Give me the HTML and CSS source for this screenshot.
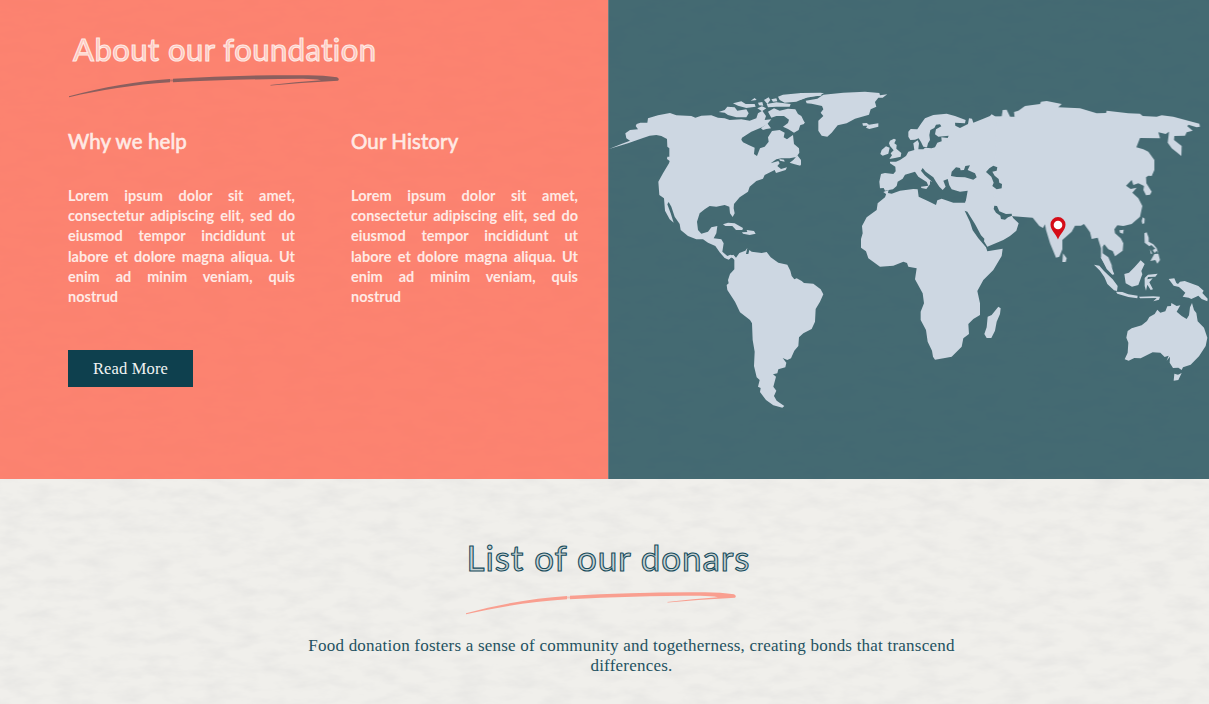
FILE: index.html
```html
<!DOCTYPE html>
<html lang="en">
<head>
<meta charset="utf-8">
<title>Our foundation</title>
<link rel="stylesheet" href="styles.css">
</head>
<body>
<svg class="defs" aria-hidden="true">
  <symbol id="swoosh" viewBox="0 0 272 24">
    <path d="M1 21.200 C35 12 70 6 102 4 L102 7.300 C65 9.800 32 15 1 22.300Z M105 3.700 C150 1.200 195 -.2 240 .2 Q256 .4 269 2.300 Q272 4 270 5.700 Q235 7.500 203 10.500 L202 9.900 Q228 6.800 253 5.200 Q246 3.900 235 3.800 C190 3.900 145 5.300 105 7.300Z"/>
    <path d="M101 4.500H106V6.500H101Z" opacity=".5"/>
  </symbol>
</svg>
<main>
  <div class="intro">
    <section class="about">
      <h2 class="sketch about-title">About our foundation</h2>
      <svg class="swoosh swoosh-dark"><use href="#swoosh"/></svg>
      <div class="columns">
        <article>
          <h3>Why we help</h3>
          <p>Lorem ipsum dolor sit amet, consectetur adipiscing elit, sed do eiusmod tempor incididunt ut labore et dolore magna aliqua. Ut enim ad minim veniam, quis nostrud</p>
        </article>
        <article>
          <h3>Our History</h3>
          <p>Lorem ipsum dolor sit amet, consectetur adipiscing elit, sed do eiusmod tempor incididunt ut labore et dolore magna aliqua. Ut enim ad minim veniam, quis nostrud</p>
        </article>
      </div>
      <a class="button">Read More</a>
    </section>
    <section class="world">
      <svg class="map" viewBox="608 0 601 479">
        <mask id="seas" maskUnits="userSpaceOnUse" x="608" y="0" width="601" height="479">
          <rect x="608" y="0" width="601" height="479" fill="#fff"/>
          <g transform="translate(800 80) scale(.33333)" fill="#000">
            <path d="M453 288L455 275L468 262L480 264L482 271L492 270L496 258L510 256L503 270L525 280L530 292L520 299L495 292L470 291Z"/>
            <path d="M558 276L568 265L580 257L592 262L590 272L577 275L584 287L596 297L598 308L606 312L605 325L590 328L577 318L581 308L574 290Z"/>
            <path d="M583 377L591 378L598 394L618 402L635 401L636 407L624 412L615 419L603 417L601 407L588 398L581 387Z"/>
          </g>
        </mask>
        <g class="land" mask="url(#seas)">
          <g transform="translate(608 80) scale(.33333)">
            <path d="M3 207L40 192L66 182L55 175L52 160L66 150L90 148L83 138L86 132L97 128L118 128L120 115L150 106L186 99L205 106L250 108L262 113L280 107L310 106L330 113L350 115L365 120L400 118L425 122L445 115L450 100L463 92L474 108L470 120L490 118L478 132L462 142L430 155L402 173L400 179L405 187L422 195L440 203L438 222L447 228L456 205L470 200L482 185L480 172L492 153L515 150L530 158L527 172L537 178L545 172L555 165L558 192L573 205L574 218L565 231L545 235L520 235L505 238L488 250L511 243L515 250L508 258L519 267L537 262L533 270L504 279L500 270L470 285L465 296L445 303L425 320L420 335L395 352L378 372L377 385L380 400L374 411L366 400L364 380L350 375L325 380L305 378L290 388L275 400L267 425L270 450L280 461L300 455L310 442L328 438L325 460L317 475L340 478L347 490L343 515L358 528L367 524L378 528L385 540L375 535L368 532L362 539L350 534L335 517L322 498L300 488L285 478L265 478L240 468L218 450L215 432L200 410L190 380L182 366L178 373L188 400L197 428L185 418L171 392L168 355L154 345L151 305L165 280L183 250L185 243L177 237L178 230L184 230L184 205L178 200L177 177L160 168L145 165L125 167L105 174L60 190Z"/>
            <path d="M332 96L350 90L358 80L380 82L388 92L415 88L422 100L415 112L385 112L360 105L350 98Z M375 70L400 64L413 72L440 72L443 80L415 84L390 77Z M428 62L440 54L446 60Z M448 85L462 79L475 85L462 94Z M450 68L463 66L466 77L453 76Z M468 60L482 52L487 60L478 72Z M476 72L505 67L548 72L545 80L505 80L480 82Z M510 50L525 44L580 39L640 38L640 47L600 50L565 65L530 68L515 60Z M490 58L505 55L508 64L495 65Z"/>
            <path d="M480 95L498 85L515 92L540 86L562 88L570 102L580 108L590 128L578 131L572 150L558 158L540 147L525 140L540 129L543 119L528 108L505 108L490 113Z M459 145L478 130L489 145L475 147L465 150Z M545 248L556 240L568 226L579 240L577 257L560 253Z M345 433L360 428L380 430L405 444L403 450L384 450L373 438L352 438Z M402 457L418 456L416 450L438 453L443 461L425 465L405 461Z M514 237L528 239L530 245L516 242Z"/>
          </g>
          <g transform="translate(700 230) scale(.33333)">
            <path d="M88 80L100 74L108 83L118 69L136 62L142 54L138 72L145 72L148 60L155 65L185 69L200 66L212 82L235 98L262 104L271 122L275 138L283 148L290 145L305 153L312 159L340 161L362 178L370 193L360 215L347 237L345 275L335 297L310 310L297 322L295 348L283 362L273 385L262 390L248 384L259 398L256 412L235 418L232 430L219 433L228 440L220 470L229 482L222 498L230 512L253 528L247 533L220 526L198 510L180 486L182 474L174 470L179 450L170 442L162 408L164 365L158 330L156 280L150 270L120 247L105 215L82 180L80 165L86 160L84 150L90 132L103 118L103 90L96 80L88 88L72 82Z"/>
          </g>
          <g transform="translate(800 80) scale(.33333)">
            <path d="M0 39L72 39L60 46L20 53L0 60Z M17 62L52 56L70 44L130 38L195 35L238 39L240 46L262 43L248 53L235 53L225 66L229 80L212 88L207 104L165 116L140 130L113 136L95 158L82 170L65 167L55 152L55 122L70 108L62 98L70 88L66 78L35 71L20 70Z M0 121L14 126L12 132L0 136Z M0 240L3 242L3 255L0 254Z"/>
            <path d="M187 130L200 129L207 134L235 130L235 140L208 147L198 143L202 137L189 137Z M270 182L282 176L288 179L283 190L290 195L289 206L304 219L302 230L285 234L268 237L276 226L272 220L281 211L270 198L267 190Z M245 210L258 199L269 203L265 221L248 227L241 222Z"/>
            <path d="M240 325L238 305L243 282L255 279L280 282L287 274L286 260L270 250L270 245L288 245L300 240L318 228L325 215L343 210L340 190L353 181L357 190L355 208L370 208L375 203L395 205L405 202L412 188L425 184L424 172L443 174L446 167L415 170L405 163L408 148L424 139L420 133L408 134L403 144L391 150L388 165L390 180L384 190L381 202L370 200L363 186L356 175L345 179L331 180L325 170L325 155L332 147L352 148L364 130L375 115L400 105L440 101L465 108L497 120L495 130L465 128L466 137L480 144L504 132L507 115L516 116L520 128L550 116L570 108L575 103L585 109L600 110L650 110L650 395L560 378L497 366L503 332L480 335L455 328L448 316L443 297L430 302L437 320L428 330L418 320L408 305L400 292L377 275L368 264L363 272L374 286L397 306L390 303L390 313L379 327L364 324L363 320L385 317L380 306L355 290L345 275L315 284L308 296L293 305L290 318L279 328L262 331L255 332L251 324Z"/>
            <path d="M250 336L266 330L262 345Z"/>
          </g>
          <g transform="translate(850 180) scale(.33333)">
            <path d="M353 50L560 50L560 112L485 106L490 115L506 130L499 152L480 168L460 180L412 200L402 184L403 176L393 166L375 132L352 95L344 92L360 126L368 151L385 175L408 202L412 214L458 206L455 228L430 270L400 300L382 333L390 370L390 405L370 417L355 432L357 462L340 475L335 500L305 530L285 534L255 539L249 530L246 512L233 485L228 450L212 420L212 395L222 370L218 340L195 298L200 265L175 260L171 249L160 245L130 257L90 260L55 235L48 214L33 203L33 177L38 160L36 138L50 112L80 90L83 70L105 52L110 38L125 41L150 32L190 27L203 28L206 50L235 64L258 75L262 61L275 56L310 68L345 68Z"/>
            <path d="M413 410L425 405L445 380L452 385L450 402L440 425L435 452L424 474L410 474L403 462L410 442Z"/>
          </g>
          <g transform="translate(1000 90) scale(.33333)">
            <path d="M-10 80L5 79L8 60L20 59L32 84L45 96L42 66L55 62L75 48L120 42L123 35L140 33L185 42L175 52L240 55L290 70L318 69L320 62L385 70L420 71L428 78L470 80L485 76L520 80L598 101L600 110L590 112L565 104L562 109L578 122L560 127L555 137L523 138L522 150L545 168L544 198L515 175L503 158L507 125L497 132L475 127L480 145L420 144L409 172L430 178L445 185L463 210L463 240L455 258L445 257L438 262L439 280L455 305L450 314L438 316L430 300L432 288L415 280L400 285L395 270L378 287L392 297L410 293L397 308L415 325L427 348L420 380L395 402L370 408L352 406L343 418L345 430L362 445L370 460L368 482L345 499L338 483L325 478L313 463L308 470L308 490L325 502L335 525L337 545L320 530L303 503L303 475L293 443L275 447L270 427L252 402L243 407L225 407L215 425L187 450L187 478L178 500L168 503L150 460L138 420L135 403L129 414L118 408L98 383L40 379L-20 370Z"/>
            <path d="M189 490L200 505L197 516L187 516Z M358 421L371 419L369 431L360 428Z M428 382L434 386L433 400L427 402L425 393Z"/>
            <path d="M433 430L440 427L446 443L446 455L460 463L470 475L475 490L470 482L464 489L458 480L466 476L454 465L448 469L434 458Z M463 492L475 491L480 510L472 521L466 510L451 513Z M450 478L457 491L452 491Z"/>
          </g>
          <g transform="translate(1020 200) scale(.33333)">
            <path d="M222 194L238 197L252 213L278 238L293 258L291 273L282 271L262 252L253 231L240 212Z M242 171L253 178L275 204L283 223L277 224L260 207Z M288 275L307 276L325 283L353 287L352 295L325 291L292 281Z M357 290L400 289L420 290L417 299L400 304L410 294L360 295Z"/>
            <path d="M313 222L327 218L344 201L362 181L374 192L364 213L367 223L355 255L336 260L317 250Z M374 234L384 224L413 221L406 230L384 231L382 238L398 235L388 247L399 268L392 270L382 254L378 272L374 258Z"/>
            <path d="M446 237L463 235L469 249L474 252L480 245L494 243L535 258L551 272L547 279L563 296L562 304L545 297L535 287L514 297L506 293L488 290L496 278L477 261L461 257Z"/>
            <path d="M323 393L335 385L365 376L381 363L388 351L404 342L412 329L421 338L436 334L442 319L453 318L454 309L470 318L481 316L470 335L485 348L500 357L507 346L510 322L516 309L522 330L529 339L533 364L552 383L562 413L557 438L537 469L512 494L489 502L485 510L475 503L459 504L449 488L450 470L440 482L446 467L434 471L421 458L398 457L362 475L343 474L326 482L314 478L323 458L325 428L319 413Z M463 521L474 524L485 519L475 540L461 542Z"/>
          </g>
        </g>
        <path class="pin" d="M1058 239.500C1056 234 1050.500 230 1050.500 224.500A7.400 7.400 0 0 1 1065.500 224.500C1065.500 230 1060 234 1058 239.500Z"/>
        <circle cx="1058" cy="225" r="4.300" fill="#fff"/>
      </svg>
    </section>
  </div>
  <section class="donors">
    <h2 class="sketch donors-title">List of our donars</h2>
    <svg class="swoosh swoosh-coral"><use href="#swoosh"/></svg>
    <p>Food donation fosters a sense of community and togetherness, creating bonds that transcend differences.</p>
  </section>
</main>
</body>
</html>
```
FILE: styles.css
```css
* { box-sizing: border-box; }

body {
  margin: 0;
  height: 704px;
  overflow: hidden;
  font-family: Lato, "Open Sans", sans-serif;
  background-color: #f0efeb;
  background-image: url("data:image/svg+xml,%3Csvg xmlns='http://www.w3.org/2000/svg' width='1209' height='704'%3E%3Cfilter id='n' x='0' y='0' width='100%25' height='100%25'%3E%3CfeTurbulence type='fractalNoise' baseFrequency='.035 .09' numOctaves='4' seed='8'/%3E%3CfeColorMatrix values='0 0 0 0 .55 0 0 0 0 .55 0 0 0 0 .57 .36 0 0 0 -.14'/%3E%3C/filter%3E%3Crect width='1209' height='704' filter='url(%23n)'/%3E%3C/svg%3E");
}

h2, h3, p { margin: 0; }

.defs { display: none; }

.intro {
  display: grid;
  grid-template-columns: 608px 1fr;
  height: 479px;
}

.about {
  padding: 29px 30px 0 68px;
  background: rgba(254, 110, 88, .84);
}

.world {
  border-left: 1px solid #6d7f83;
  background: rgba(38, 82, 93, .85);
}

.map {
  display: block;
  width: 601px;
  height: 479px;
  margin-left: -1px;
}

.land { fill: #cdd7e2; }
.pin { fill: #d50c17; }

.sketch {
  font-weight: 400;
  line-height: 40px;
  white-space: nowrap;
}

.about-title {
  margin-left: 5px;
  font-size: 31px;
  letter-spacing: .47px;
  color: rgba(255, 240, 236, .6);
  -webkit-text-stroke: 1.1px #ffeae5;
}

.swoosh {
  display: block;
  width: 272px;
  height: 24px;
}

.swoosh-dark {
  margin: 6px 0 0;
  fill: #8b5f5e;
}

.columns {
  display: grid;
  grid-template-columns: 227px 227px;
  column-gap: 56px;
  margin-top: 28px;
  color: #ffeae5;
}

h3 {
  font-size: 20.5px;
  font-weight: 400;
  line-height: 28px;
  letter-spacing: .1px;
  -webkit-text-stroke: .6px #ffeae5;
}

.columns p {
  margin-top: 31px;
  font-size: 14.5px;
  font-weight: 700;
  line-height: 20.2px;
  text-align: justify;
}

.button {
  display: flex;
  align-items: center;
  justify-content: center;
  width: 125px;
  height: 37px;
  margin-top: 43px;
  background: #0e404e;
  color: #f1f4f4;
  font: 16.5px "Liberation Serif", serif;
  letter-spacing: .15px;
}

.donors {
  display: flex;
  flex-direction: column;
  align-items: center;
  padding-top: 58px;
  color: #1f5261;
}

.donors-title {
  margin-left: 8px;
  font-size: 35px;
  letter-spacing: .9px;
  color: #c6d1d2;
  -webkit-text-stroke: 1.1px #164c5c;
}

.swoosh-coral {
  margin: 15px 0 0 -8px;
  fill: #f99f90;
}

.donors p {
  width: 670px;
  margin: 20px 0 0 54px;
  font: 17px/19.5px "Liberation Serif", serif;
  letter-spacing: .22px;
  text-align: center;
}
```
